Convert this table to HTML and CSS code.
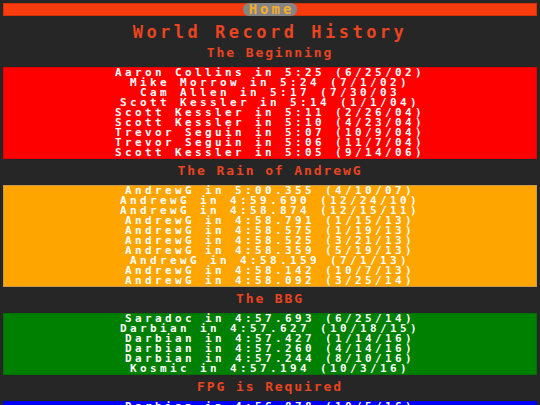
FILE: index.html
```html
<!DOCTYPE html>
<html>
<head>
<meta charset="utf-8">
<title>World Record History</title>
<link rel="stylesheet" href="styles.css">
</head>
<body>
<nav class="topbar"><a class="home" href="#">Home</a></nav>
<h1 class="title">World Record History</h1>

<h2 class="era">The Beginning</h2>
<ul class="records red">
<li>Aaron Collins in 5:25 (6/25/02)</li>
<li>Mike Morrow in 5:24 (7/1/02)</li>
<li>Cam Allen in 5:17 (7/30/03</li>
<li>Scott Kessler in 5:14 (1/1/04)</li>
<li>Scott Kessler in 5:11 (2/26/04)</li>
<li>Scott Kessler in 5:10 (4/23/04)</li>
<li>Trevor Seguin in 5:07 (10/9/04)</li>
<li>Trevor Seguin in 5:06 (11/7/04)</li>
<li>Scott Kessler in 5:05 (9/14/06)</li>
</ul>

<h2 class="era">The Rain of AndrewG</h2>
<ul class="records orange">
<li>AndrewG in 5:00.355 (4/10/07)</li>
<li>AndrewG in 4:59.690 (12/24/10)</li>
<li>AndrewG in 4:58.874 (12/15/11)</li>
<li>AndrewG in 4:58.791 (1/15/13)</li>
<li>AndrewG in 4:58.575 (1/19/13)</li>
<li>AndrewG in 4:58.525 (3/21/13)</li>
<li>AndrewG in 4:58.359 (5/19/13)</li>
<li>AndrewG in 4:58.159 (7/1/13)</li>
<li>AndrewG in 4:58.142 (10/7/13)</li>
<li>AndrewG in 4:58.092 (3/25/14)</li>
</ul>

<h2 class="era">The BBG</h2>
<ul class="records green">
<li>Saradoc in 4:57.693 (6/25/14)</li>
<li>Darbian in 4:57.627 (10/18/15)</li>
<li>Darbian in 4:57.427 (1/14/16)</li>
<li>Darbian in 4:57.260 (4/14/16)</li>
<li>Darbian in 4:57.244 (8/10/16)</li>
<li>Kosmic in 4:57.194 (10/3/16)</li>
</ul>

<h2 class="era">FPG is Required</h2>
<ul class="records blue">
<li>Darbian in 4:56.878 (10/5/16)</li>
</ul>
</body>
</html>
```

FILE: styles.css
```css
html, body {
  margin: 0;
  padding: 0;
  background: #262626;
}
body {
  padding: 3px 3px 20px 3px;
  font-family: "DejaVu Sans Mono", "Liberation Mono", monospace;
  font-weight: bold;
}
.topbar {
  display: flex;
  justify-content: center;
  height: 13px;
  background: #f83c0e;
  box-shadow: inset 0 0 0 1px rgba(0,0,0,0.15);
}
.home {
  display: block;
  height: 13px;
  line-height: 13px;
  padding: 0 3px 0 6px;
  border-radius: 6px;
  background: #858585;
  color: #f2ae2a;
  font-size: 14px;
  letter-spacing: 3px;
  text-decoration: none;
}
.title {
  margin: 0;
  padding-top: 7px;
  height: 18px;
  line-height: 18px;
  text-align: center;
  color: #ea4420;
  font-size: 17px;
  letter-spacing: 3.5px;
}
.era {
  margin: 0;
  height: 26px;
  line-height: 24px;
  text-align: center;
  color: #ea4420;
  font-size: 13px;
  letter-spacing: 1.9px;
}
.records {
  list-style: none;
  margin: 0;
  padding: 0;
  border: 1px solid rgba(0,0,0,0.12);
  color: #ffffff;
  font-size: 11px;
  line-height: 10px;
  letter-spacing: 3.38px;
  text-align: center;
}
.records li {
  height: 10px;
  white-space: nowrap;
}
.red { background: #ff0000; }
.orange { background: #ffa500; border-color: #c89a4a; }
.green { background: #008000; }
.blue { background: #0000ff; }
```
